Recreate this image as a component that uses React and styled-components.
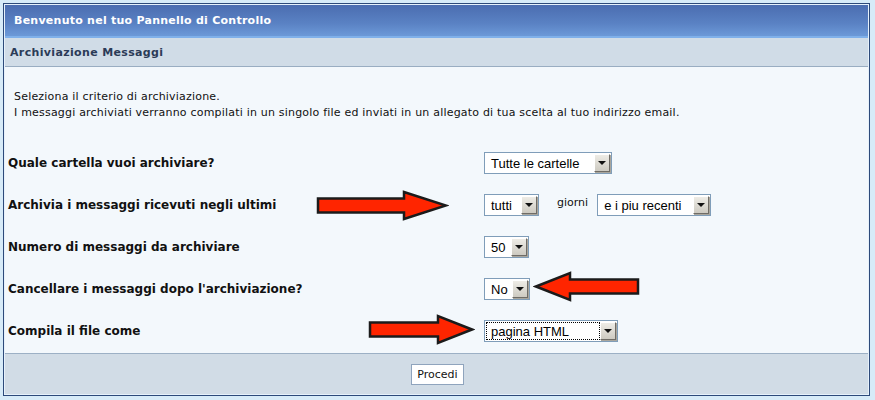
import styled, { createGlobalStyle } from 'styled-components';

const GlobalStyle = createGlobalStyle`
  body {
    margin: 0;
    background: #d7ebf8;
    font-family: "DejaVu Sans", Verdana, sans-serif;
  }
`

const Panel = styled.div`
  position: relative;
  margin: 3px;
  width: 867px;
  height: 393px;
  box-sizing: border-box;
  border: 1px solid #2d4a7a;
  padding: 1px;
  background: #e6f1fb;
  display: flex;
  flex-direction: column;
`

const Header = styled.div`
  height: 33px;
  box-sizing: border-box;
  padding-left: 9px;
  display: flex;
  align-items: center;
  background: linear-gradient(#4b6db0, #5a82c4 60%, #6c99d8);
  border-bottom: 2px solid #7fb0ea;
  color: #fff;
  font-weight: bold;
  font-size: 11px;
  letter-spacing: 0.25px;
`

const SubHeader = styled.div`
  height: 29px;
  box-sizing: border-box;
  padding-left: 5px;
  display: flex;
  align-items: center;
  background: #d0dce7;
  border-bottom: 1px solid #99adc2;
  color: #2b3b57;
  font-weight: bold;
  font-size: 11px;
  letter-spacing: 0.35px;
`

const Body = styled.div`
  position: relative;
  height: 286px;
  background: #f3f8fc;
  display: flex;
  flex-direction: column;
`

const Intro = styled.div`
  padding: 22px 0 0 9px;
  height: 53px;
  font-size: 11px;
  line-height: 16px;
  letter-spacing: 0.2px;
  color: #111;
`

const Row = styled.div`
  display: grid;
  grid-template-columns: 479px 1fr;
  align-items: center;
  height: 42px;
`

const Label = styled.div`
  padding-left: 3px;
  font-size: 12px;
  font-weight: bold;
  color: #111;
`

const Controls = styled.div`
  display: flex;
  align-items: center;
`

const Days = styled.span`
  font-size: 11px;
  color: #111;
  margin: 0 9px 0 18px;
  padding-bottom: 6px;
`

const Select = styled.div`
  width: ${p => p.$w}px;
  height: 22px;
  box-sizing: border-box;
  border: 1px solid #7f9db9;
  background: #fff;
  display: flex;
  align-items: center;
  padding: 1px;
`

const Value = styled.div`
  flex: 1;
  height: 18px;
  box-sizing: border-box;
  padding-left: 4px;
  display: flex;
  align-items: center;
  font-family: "Liberation Sans", Arial, sans-serif;
  font-size: 13px;
  color: #000;
  border: 1px ${p => (p.$focus ? 'dotted #000' : 'solid transparent')};
`

const DropButton = styled.div`
  width: 16px;
  height: 18px;
  box-sizing: border-box;
  background: linear-gradient(#eeece6, #cdcac1);
  border: 1px solid;
  border-color: #fff #6f6c66 #6f6c66 #fff;
  box-shadow: 1px 1px 0 #a9a69d;
  display: flex;
  align-items: center;
  justify-content: center;

  &::after {
    content: "";
    border-left: 4px solid transparent;
    border-right: 4px solid transparent;
    border-top: 4px solid #111;
  }
`

const Footer = styled.div`
  flex: 1;
  border-top: 1px solid #9cb0c5;
  background: #d1dce6;
  display: flex;
  align-items: center;
  justify-content: center;
`

const Button = styled.button`
  height: 21px;
  padding: 0 5px;
  background: #fff;
  border: 1px solid #8fa4bd;
  font-family: "DejaVu Sans", Verdana, sans-serif;
  font-size: 11px;
  color: #111;
  margin-left: 2px;
`

const ArrowSvg = styled.svg`
  position: absolute;
  left: ${p => p.$x}px;
  top: ${p => p.$y}px;
`

const Dropdown = ({ w, value, focus }) => (
    <Select $w={w}>
        <Value $focus={focus}>{value}</Value>
        <DropButton />
    </Select>
)

// tail/tip are page x coordinates, cy the page y centre
const Arrow = ({ tail, tip, cy, head }) => {
    const len = Math.abs(tip - tail);
    const pad = 3;
    const w = len + pad * 2;
    const h = 27 + pad * 2;
    const pts = [
        [0, -7], [len - head, -7], [len - head, -13.5], [len, 0],
        [len - head, 13.5], [len - head, 7], [0, 7],
    ].map(([x, y]) => {
        const px = tip > tail ? x + pad : len - x + pad;
        return `${px},${y + h / 2}`;
    }).join(' ');
    return (
        <ArrowSvg $x={Math.min(tail, tip) - 5 - pad} $y={cy - 67 - h / 2} width={w} height={h}>
            <polygon points={pts} fill="#ff2500" stroke="#1b1b1b" strokeWidth="2.5" strokeLinejoin="miter" />
        </ArrowSvg>
    );
}

const App = () => {
    return (
        <>
            <GlobalStyle />
            <Panel>
                <Header>Benvenuto nel tuo Pannello di Controllo</Header>
                <SubHeader>Archiviazione Messaggi</SubHeader>
                <Body>
                    <Intro>
                        Seleziona il criterio di archiviazione.<br />
                        I messaggi archiviati verranno compilati in un singolo file ed inviati in un allegato di tua scelta al tuo indirizzo email.
                    </Intro>
                    <Row>
                        <Label>Quale cartella vuoi archiviare?</Label>
                        <Controls>
                            <Dropdown w={128} value="Tutte le cartelle" />
                        </Controls>
                    </Row>
                    <Row>
                        <Label>Archivia i messaggi ricevuti negli ultimi</Label>
                        <Controls>
                            <Dropdown w={55} value="tutti" />
                            <Days>giorni</Days>
                            <Dropdown w={114} value="e i piu recenti" />
                        </Controls>
                    </Row>
                    <Row>
                        <Label>Numero di messaggi da archiviare</Label>
                        <Controls>
                            <Dropdown w={45} value="50" />
                        </Controls>
                    </Row>
                    <Row>
                        <Label>Cancellare i messaggi dopo l'archiviazione?</Label>
                        <Controls>
                            <Dropdown w={46} value="No" />
                        </Controls>
                    </Row>
                    <Row>
                        <Label>Compila il file come</Label>
                        <Controls>
                            <Dropdown w={134} value="pagina HTML" focus />
                        </Controls>
                    </Row>
                    <Arrow tail={318} tip={446} cy={205} head={42} />
                    <Arrow tail={638} tip={536} cy={286} head={34} />
                    <Arrow tail={370} tip={472} cy={329} head={34} />
                </Body>
                <Footer>
                    <Button>Procedi</Button>
                </Footer>
            </Panel>
        </>
    );
}

export default App;
